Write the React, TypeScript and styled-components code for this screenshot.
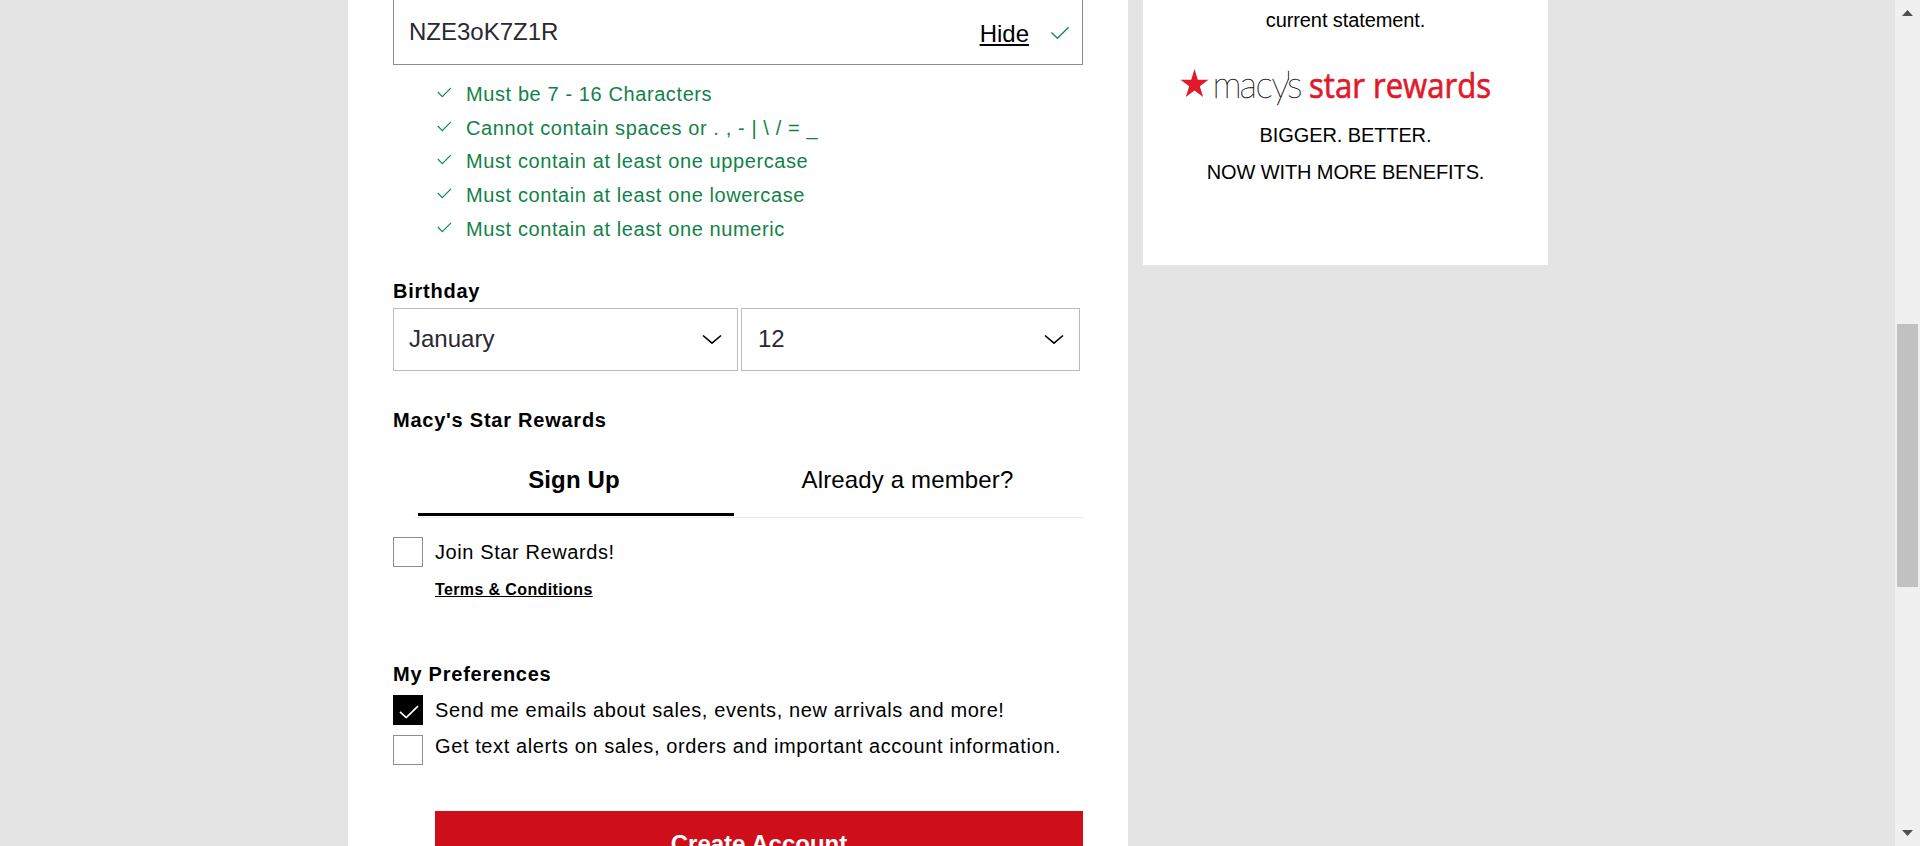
import React from "react";
import styled, { createGlobalStyle } from "styled-components";

const GlobalStyle = createGlobalStyle`
  * { box-sizing: border-box; }
  body {
    margin: 0;
    overflow: hidden;
    background: #e4e4e4;
    color: #000;
    font: 20px "Liberation Sans", Arial, sans-serif;
  }
`;

const Page = styled.div`
  display: flex;
  width: 1920px;
  height: 846px;
  overflow: hidden;
`;

const Content = styled.div`
  flex: 1;
  display: flex;
  align-items: flex-start;
  gap: 15px;
  padding-left: 348px;
`;

const FormPanel = styled.main`
  width: 780px;
  height: 846px;
  padding: 0 45px;
  background: #fff;
  overflow: hidden;
  letter-spacing: 0.6px;
`;

const PasswordField = styled.div`
  display: flex;
  align-items: flex-start;
  height: 65px;
  padding: 0 12px 0 15px;
  border: 1px solid #8b8b90;
  border-top: 0;
  letter-spacing: 0;
  font-size: 24px;
  line-height: 28px;
`;

const PasswordValue = styled.span`
  flex: 1;
  padding-top: 18px;
  color: #2a2833;
`;

const HideButton = styled.a`
  margin: 20px 21px 0 0;
  text-decoration: underline;
  text-decoration-thickness: 2px;
  text-underline-offset: 2px;
`;

const FieldCheck = styled.svg`
  margin-top: 26px;
  width: 20px;
  height: 14px;
`;

const Rules = styled.ul`
  margin: 13px 0 0;
  padding: 0 0 0 44px;
  list-style: none;
  color: #118247;
`;

const Rule = styled.li`
  display: flex;
  align-items: center;
  height: 33.6px;
  gap: 14px;
`;

const RuleCheck = styled.svg`
  width: 15px;
  height: 11px;
  margin-top: -4px;
`;

const Heading = styled.h2<{ $top: number }>`
  margin: ${(p) => p.$top}px 0 0;
  font-size: 20px;
  font-weight: 700;
  line-height: 24px;
  letter-spacing: 0.76px;
`;

const Selects = styled.div`
  display: flex;
  gap: 3px;
  margin-top: 5px;
`;

const SelectBox = styled.div<{ $width: number; $indent?: number }>`
  display: flex;
  align-items: center;
  justify-content: space-between;
  width: ${(p) => p.$width}px;
  height: 63px;
  padding: 0 15px 1px ${(p) => p.$indent ?? 15}px;
  border: 1px solid #bbb;
  color: #2a2833;
  font-size: 24px;
  letter-spacing: 0;
`;

const Chevron = styled.svg`
  width: 20px;
  height: 11px;
  margin-top: 2px;
`;

const Tabs = styled.div`
  display: flex;
  height: 68px;
  margin: 18px 0 0 22px;
  padding-left: 3px;
  border-bottom: 1px solid #ebebeb;
`;

const Tab = styled.div<{ $active?: boolean }>`
  width: ${(p) => (p.$active ? 316 : 347)}px;
  height: 66px;
  padding: 16px ${(p) => (p.$active ? 4 : 0)}px 0 0;
  border-bottom: 3px solid ${(p) => (p.$active ? "#000" : "transparent")};
  font-size: 24px;
  font-weight: ${(p) => (p.$active ? 700 : 400)};
  line-height: 28px;
  letter-spacing: 0.15px;
  text-align: center;
`;

const Option = styled.label<{ $top: number; $shift?: number }>`
  display: flex;
  gap: 12px;
  height: 30px;
  margin-top: ${(p) => p.$top}px;
  line-height: ${(p) => 30 - (p.$shift ?? 0) * 2}px;
  white-space: nowrap;
`;

const Checkbox = styled.span<{ $checked?: boolean }>`
  display: flex;
  flex: none;
  width: 30px;
  height: 30px;
  padding: 9px 0 0 5px;
  border: 1px solid ${(p) => (p.$checked ? "#000" : "#8e8e92")};
  background: ${(p) => (p.$checked ? "#000" : "#fff")};
`;

const BoxCheck = styled.svg`
  width: 20px;
  height: 14px;
`;

const Terms = styled.a`
  display: block;
  margin: 13px 0 0 42px;
  font-size: 16px;
  font-weight: 700;
  line-height: 20px;
  letter-spacing: 0.38px;
  text-decoration: underline;
  text-decoration-thickness: 1px;
  text-underline-offset: 1px;
`;

const SubmitButton = styled.button`
  display: block;
  width: 648px;
  height: 66px;
  margin: 46px 0 0 42px;
  padding: 0;
  border: 0;
  background: #ce0f1b;
  color: #fff;
  font: 700 24px "Liberation Sans", Arial, sans-serif;
`;

const SidePanel = styled.aside`
  width: 405px;
  height: 265px;
  padding-top: 2px;
  background: #fff;
  letter-spacing: -0.1px;
  text-align: center;
`;

const SideText = styled.p`
  margin: 0;
  line-height: 37px;
`;

const Logo = styled.svg`
  display: block;
  width: 405px;
  height: 78px;
  letter-spacing: 0;
`;

const Scrollbar = styled.div`
  display: flex;
  flex-direction: column;
  align-items: center;
  width: 25px;
  height: 846px;
  padding: 10px 0;
  background: #f0f0f0;
`;

const Arrow = styled.svg`
  flex: none;
  width: 11px;
  height: 6px;
`;

const Thumb = styled.div`
  width: 21px;
  height: 263px;
  margin: 308px 0 243px;
  background: #c1c1c1;
`;

const RULES = [
  "Must be 7 - 16 Characters",
  "Cannot contain spaces or . , - | \\ / = _",
  "Must contain at least one uppercase",
  "Must contain at least one lowercase",
  "Must contain at least one numeric",
];

const DownIcon = () => (
  <Chevron viewBox="0 0 20 11">
    <path d="M1 1.5 L10 9.2 L19 1.5" fill="none" stroke="#000" strokeWidth="1.6" />
  </Chevron>
);

export default function App() {
  return (
    <Page>
      <GlobalStyle />
      <Content>
        <FormPanel>
          <PasswordField>
            <PasswordValue>NZE3oK7Z1R</PasswordValue>
            <HideButton>Hide</HideButton>
            <FieldCheck viewBox="0 0 20 14">
              <path d="M1.4 6.5 L7.4 12.3 L18.7 1.2" fill="none" stroke="#118a5c" strokeWidth="1.3" />
            </FieldCheck>
          </PasswordField>
          <Rules>
            {RULES.map((rule) => (
              <Rule key={rule}>
                <RuleCheck viewBox="0 0 15 11">
                  <path d="M0.8 5 L5.3 9.6 L14 0.9" fill="none" stroke="#118a5c" strokeWidth="1.2" />
                </RuleCheck>
                {rule}
              </Rule>
            ))}
          </Rules>
          <Heading $top={33}>Birthday</Heading>
          <Selects>
            <SelectBox $width={345}>
              January
              <DownIcon />
            </SelectBox>
            <SelectBox $width={339} $indent={16}>
              12
              <DownIcon />
            </SelectBox>
          </Selects>
          <Heading $top={37}>Macy's Star Rewards</Heading>
          <Tabs>
            <Tab $active>Sign Up</Tab>
            <Tab>Already a member?</Tab>
          </Tabs>
          <Option $top={19}>
            <Checkbox />
            Join Star Rewards!
          </Option>
          <Terms>Terms &amp; Conditions</Terms>
          <Heading $top={62}>My Preferences</Heading>
          <Option $top={9}>
            <Checkbox $checked>
              <BoxCheck viewBox="0 0 20 14">
                <path d="M1 6.8 L7.2 12.6 L19 1.2" fill="none" stroke="#fff" strokeWidth="1.7" />
              </BoxCheck>
            </Checkbox>
            Send me emails about sales, events, new arrivals and more!
          </Option>
          <Option $top={10} $shift={4}>
            <Checkbox />
            Get text alerts on sales, orders and important account information.
          </Option>
          <SubmitButton>Create Account</SubmitButton>
        </FormPanel>
        <SidePanel>
          <SideText>current statement.</SideText>
          <Logo viewBox="0 2 405 78">
            <path
              d="M51.5 32 L54.8 42.8 L65.5 42.8 L56.8 49.3 L60.2 60 L51.5 53.5 L42.8 60 L46.2 49.3 L37.5 42.8 L48.2 42.8 Z"
              fill="#e01a2b"
            />
            <text
              x="69.5 96.5 112.5 128.5 142 144"
              y="61"
              fontFamily="Lato"
              fontWeight="100"
              fontSize="37"
              fill="#222"
              stroke="#222"
              strokeWidth="0.4"
            >
              macy's
            </text>
            <text
              x="166"
              y="61"
              fontFamily="Open Sans"
              fontWeight="400"
              fontSize="35"
              fill="#e01a2b"
              stroke="#e01a2b"
              strokeWidth="0.7"
              textLength="182"
              lengthAdjust="spacingAndGlyphs"
            >
              star rewards
            </text>
          </Logo>
          <SideText>BIGGER. BETTER.</SideText>
          <SideText>NOW WITH MORE BENEFITS.</SideText>
        </SidePanel>
      </Content>
      <Scrollbar>
        <Arrow viewBox="0 0 11 6">
          <path d="M5.5 0 L11 6 H0 Z" fill="#505050" />
        </Arrow>
        <Thumb />
        <Arrow viewBox="0 0 11 6">
          <path d="M0 0 H11 L5.5 6 Z" fill="#505050" />
        </Arrow>
      </Scrollbar>
    </Page>
  );
}
